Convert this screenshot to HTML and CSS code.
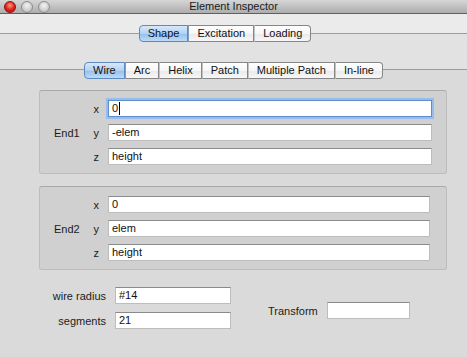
FILE: index.html
```html
<!DOCTYPE html>
<html lang="en">
  <head>
    <title>Element Inspector</title>
    <link rel="stylesheet" href="styles.css">
  </head>
  <body>
    <div class="titlebar">
      <div class="lights">
        <span class="light red"></span>
        <span class="light"></span>
        <span class="light"></span>
      </div>
      <div class="title">Element Inspector</div>
    </div>
    <div class="window">
      <div class="tabview outer">
        <div class="segments">
          <div class="seg selected">Shape</div>
          <div class="seg">Excitation</div>
          <div class="seg">Loading</div>
        </div>
        <div class="tabview inner">
          <div class="segments">
            <div class="seg selected">Wire</div>
            <div class="seg">Arc</div>
            <div class="seg">Helix</div>
            <div class="seg">Patch</div>
            <div class="seg">Multiple Patch</div>
            <div class="seg">In-line</div>
          </div>

          <div class="group">
            <div class="end-label">End1</div>
            <div class="axis">x</div>
            <div class="field focus">0<span class="caret"></span></div>
            <div class="axis">y</div>
            <div class="field">-elem</div>
            <div class="axis">z</div>
            <div class="field">height</div>
          </div>

          <div class="group second">
            <div class="end-label">End2</div>
            <div class="axis">x</div>
            <div class="field">0</div>
            <div class="axis">y</div>
            <div class="field">elem</div>
            <div class="axis">z</div>
            <div class="field">height</div>
          </div>

          <div class="params">
            <div class="param-grid">
              <div class="param-label">wire radius</div>
              <div class="field">#14</div>
              <div class="param-label">segments</div>
              <div class="field">21</div>
            </div>
            <div class="transform">
              <div class="param-label">Transform</div>
              <div class="field transform-field"></div>
            </div>
          </div>
        </div>
      </div>
    </div>
  </body>
</html>
```

FILE: styles.css
```css
* {
  margin: 0;
  box-sizing: border-box;
}
body {
  width: 467px;
  height: 357px;
  overflow: hidden;
  font-family: "Liberation Sans", Arial, sans-serif;
  font-size: 11px;
  color: #1c1c1c;
  background-color: #dbdbdb;
}

/* title bar */
.titlebar {
  height: 14px;
  display: grid;
  grid-template-columns: 1fr auto 1fr;
  align-items: center;
  background: linear-gradient(#d6d6d6, #adadad);
  border-bottom: 1px solid #606060;
}
.lights {
  display: flex;
  gap: 5px;
  padding-left: 4px;
  align-self: start;
  padding-top: 1px;
}
.light {
  width: 12px;
  height: 12px;
  border-radius: 50%;
  border: 1px solid #8c8c8c;
  background: radial-gradient(circle at 50% 35%, #f4f4f4, #d0d0d0 55%, #b4b4b4);
}
.light.red {
  border-color: #8e1010;
  background: radial-gradient(circle at 50% 35%, #ff9a8c, #e3261b 50%, #a90d0a);
}
.title {
  font-size: 11px;
  color: #1a1a1a;
  line-height: 13px;
}

/* tab views */
.window {
  height: 343px;
  padding-top: 19px;
  background-color: #ebebeb;
}
.tabview {
  border-top: 1px solid #9c9c9c;
}
.outer {
  height: 324px;
  background-color: #e2e2e2;
}
.inner {
  margin-top: 27px;
  height: 288px;
  background-color: #dadada;
}
.segments {
  display: flex;
  justify-content: center;
  margin-top: -9px;
}
.outer > .segments {
  padding-right: 17px;
}
.inner > .segments {
  margin-top: -8px;
  padding-right: 0;
}
.seg {
  height: 17px;
  line-height: 15px;
  padding: 0 8px;
  border: 1px solid #868686;
  border-left: 1px solid #c2c2c2;
  background: linear-gradient(#ffffff, #f6f6f6 50%, #e9e9e9 51%, #f7f7f7);
  color: #111;
}
.seg:first-child {
  border-left: 1px solid #868686;
  border-radius: 4px 0 0 4px;
}
.seg:last-child {
  border-radius: 0 4px 4px 0;
}
.seg.selected {
  background: linear-gradient(#d7e8fa, #b3d2f3 50%, #93bfee 51%, #bcdcf8);
  border-color: #5f89bd;
}
.seg.selected + .seg {
  border-left-color: #7f9fc6;
}

/* group boxes */
.group {
  margin: 11px 0 0 39px;
  width: 408px;
  height: 84px;
  padding: 9px 14px 0 14px;
  display: grid;
  grid-template-columns: 36px 18px 1fr;
  grid-template-rows: 17px 17px 17px;
  row-gap: 7px;
  align-items: center;
  background-color: #d0d0d0;
  border: 1px solid #bcbcbc;
  border-top-color: #a9a9a9;
  border-radius: 3px;
}
.group.second {
  margin-top: 12px;
  padding-right: 16px;
}
.end-label {
  grid-column: 1;
  grid-row: 1 / 4;
}
.axis {
  grid-column: 2;
  text-align: right;
  padding-right: 9px;
}
.group .field {
  grid-column: 3;
}

/* text fields */
.field {
  height: 17px;
  line-height: 15px;
  padding-left: 3px;
  background-color: #ffffff;
  border: 1px solid #bdbdbd;
  border-top-color: #8a8a8a;
  color: #111;
}
.field.focus {
  border-color: #5d8ccc;
  box-shadow: 0 0 0 2px #98bde8;
}
.caret {
  display: inline-block;
  width: 1px;
  height: 13px;
  margin-left: 1px;
  vertical-align: -3px;
  background-color: #000;
}

/* bottom parameters */
.params {
  display: flex;
  align-items: center;
  margin-top: 17px;
}
.param-grid {
  margin-left: 40px;
  display: grid;
  grid-template-columns: 66px 116px;
  column-gap: 9px;
  row-gap: 8px;
  align-items: center;
}
.param-label {
  text-align: right;
}
.transform {
  display: flex;
  align-items: center;
  gap: 9px;
  margin-left: 37px;
  margin-top: 5px;
}
.transform-field {
  width: 83px;
}
```
